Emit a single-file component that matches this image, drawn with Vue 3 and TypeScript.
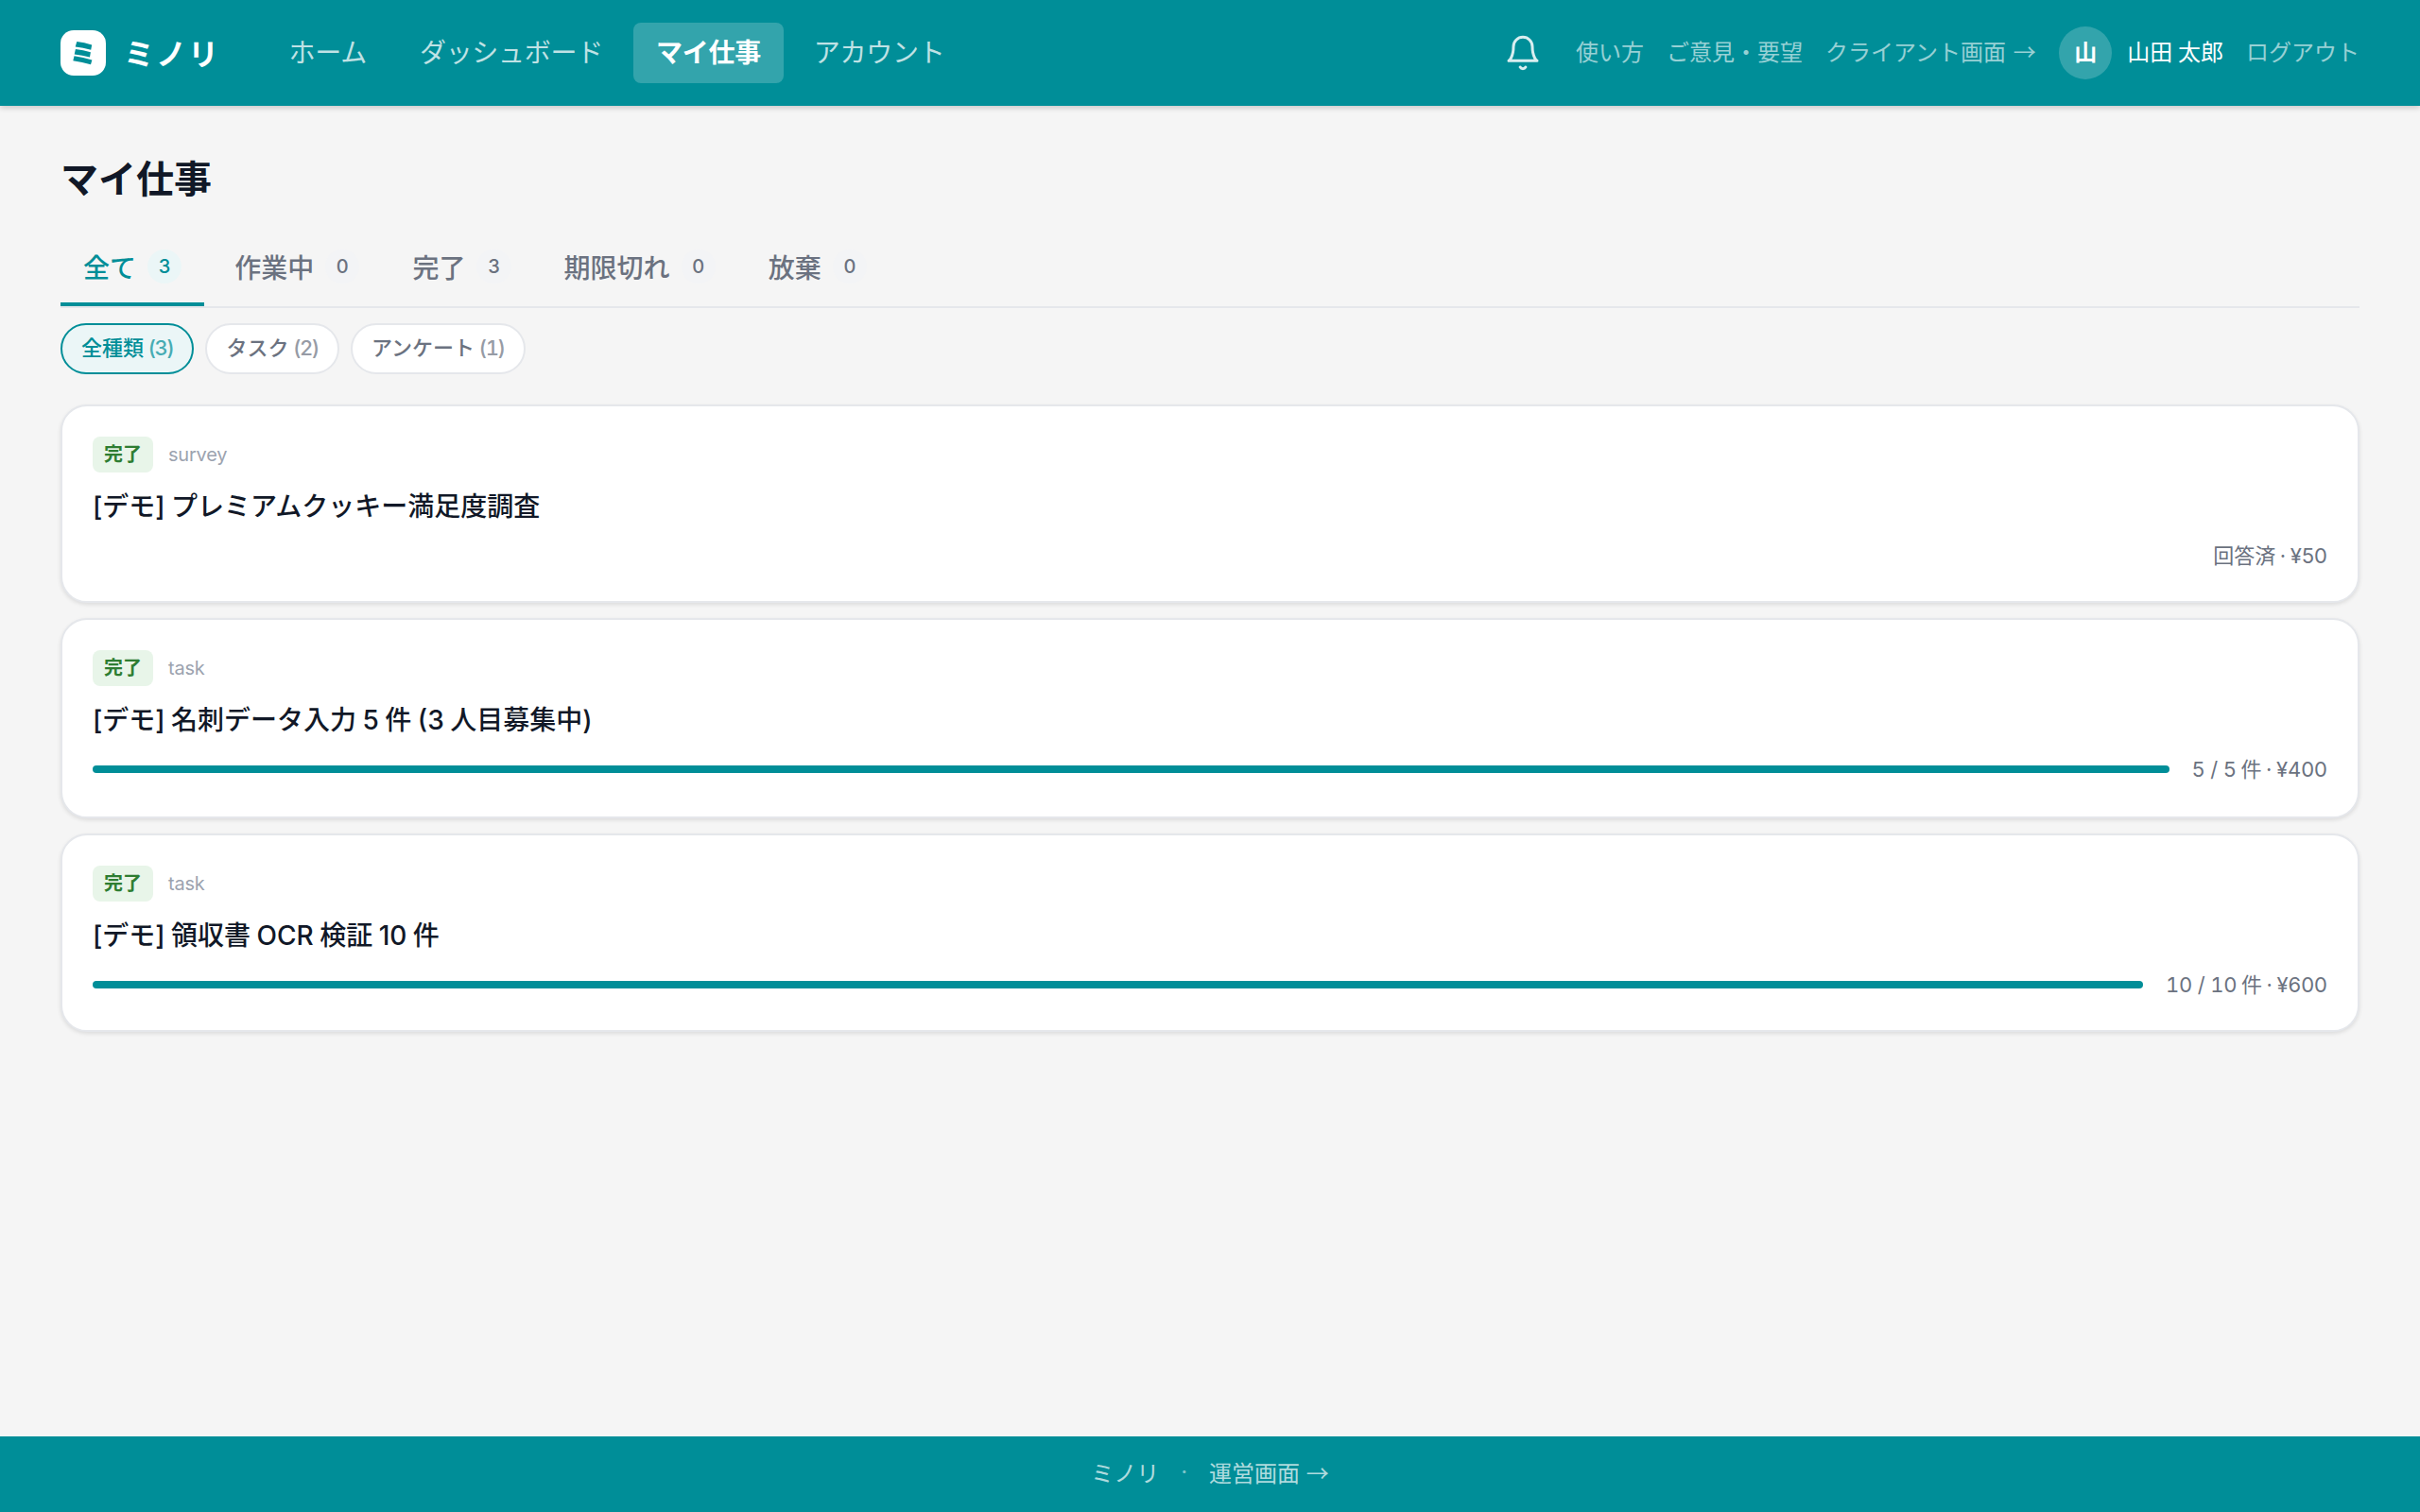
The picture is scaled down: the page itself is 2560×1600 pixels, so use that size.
<script setup lang="ts">
interface NavItem { label: string; active?: boolean }
interface Tab { label: string; count: number; active?: boolean }
interface Job {
  status: string
  kind: 'survey' | 'task'
  title: string
  done?: string
  summary: string
  progress?: number
}

const nav: NavItem[] = [
  { label: 'ホーム' },
  { label: 'ダッシュボード' },
  { label: 'マイ仕事', active: true },
  { label: 'アカウント' },
]

const tabs: Tab[] = [
  { label: '全て', count: 3, active: true },
  { label: '作業中', count: 0 },
  { label: '完了', count: 3 },
  { label: '期限切れ', count: 0 },
  { label: '放棄', count: 0 },
]

const chips: Tab[] = [
  { label: '全種類', count: 3, active: true },
  { label: 'タスク', count: 2 },
  { label: 'アンケート', count: 1 },
]

const jobs: Job[] = [
  { status: '完了', kind: 'survey', title: '[デモ] プレミアムクッキー満足度調査', summary: '回答済 · ¥50' },
  { status: '完了', kind: 'task', title: '[デモ] 名刺データ入力 5 件 (3 人目募集中)', done: '5 / 5', summary: ' 件 · ¥400', progress: 100 },
  { status: '完了', kind: 'task', title: '[デモ] 領収書 OCR 検証 10 件', done: '10 / 10', summary: ' 件 · ¥600', progress: 100 },
]
</script>

<template>
  <div class="page">
    <header class="header">
      <a class="brand">
        <svg class="logo" viewBox="0 0 48 48">
          <rect width="48" height="48" rx="14" fill="#fff" />
          <path d="M17.3 12 Q25 13 33.2 15.4 L32.2 20.8 Q24 18.3 15.7 17.5Z M15.9 20 Q24 21 31.9 23.3 L31 28.4 Q23 26.2 14.7 25.4Z M14.5 27.3 Q24 28.6 33.4 31.6 L32 36.3 Q23 33.5 13.3 32.2Z" fill="#008e98" />
        </svg>
        <span class="brand-name">ミノリ</span>
      </a>
      <nav class="nav">
        <a v-for="n in nav" :key="n.label" class="nav-item" :class="{ active: n.active }">{{ n.label }}</a>
      </nav>
      <div class="tools">
        <svg class="bell" viewBox="0 0 24 24" fill="none" stroke="currentColor" stroke-width="1.8" stroke-linecap="round" stroke-linejoin="round">
          <path d="M18 8A6 6 0 0 0 6 8c0 7-3 9-3 9h18s-3-2-3-9" />
          <path d="M13.73 21a2 2 0 0 1-3.46 0" />
        </svg>
        <a class="link">使い方</a>
        <a class="link">ご意見・要望</a>
        <a class="link">クライアント画面 <span class="arrow">→</span></a>
        <span class="user"><span class="avatar">山</span>山田 太郎</span>
        <a class="link">ログアウト</a>
      </div>
    </header>

    <main class="main">
      <h1 class="title">マイ仕事</h1>
      <div class="tabs">
        <button v-for="t in tabs" :key="t.label" class="tab" :class="{ active: t.active }">
          {{ t.label }}<span class="count">{{ t.count }}</span>
        </button>
      </div>
      <div class="chips">
        <button v-for="c in chips" :key="c.label" class="chip" :class="{ active: c.active }">
          {{ c.label }}<span class="chip-count">({{ c.count }})</span>
        </button>
      </div>
      <div class="jobs">
        <article v-for="j in jobs" :key="j.title" class="job">
          <div class="meta"><span class="status">{{ j.status }}</span><span class="kind">{{ j.kind }}</span></div>
          <h2 class="job-title">{{ j.title }}</h2>
          <div class="foot">
            <div class="track">
              <div v-if="j.progress" class="fill" :style="{ width: j.progress + '%' }"></div>
            </div>
            <span class="summary"><span v-if="j.done" class="done">{{ j.done }}</span>{{ j.summary }}</span>
          </div>
        </article>
      </div>
    </main>

    <footer class="footer"><span>ミノリ</span><span class="dot">·</span><a>運営画面 <span class="arrow">→</span></a></footer>
  </div>
</template>

<style>
body { background: #f5f5f5; }
</style>

<style scoped>
.page {
  min-height: 1600px;
  display: flex;
  flex-direction: column;
  background: #f5f5f5;
  color: #111827;
  font-family: Inter, "Noto Sans CJK JP", sans-serif;
}
.header {
  height: 112px;
  padding: 0 64px;
  display: flex;
  align-items: center;
  background: #008e98;
  color: #fff;
  box-shadow: 0 2px 6px rgba(0, 0, 0, 0.2);
}
.brand { display: flex; align-items: center; gap: 19px; width: 175px; }
.logo { width: 48px; height: 48px; }
.brand-name { padding-top: 4px; font-size: 32px; font-weight: 700; letter-spacing: 2px; line-height: 48px; }
.nav { display: flex; gap: 8px; margin-left: 42.6px; }
.nav-item {
  height: 64px;
  padding: 0 24px;
  border-radius: 8px;
  font-size: 28px;
  letter-spacing: -0.28px;
  line-height: 64px;
  color: rgba(255, 255, 255, 0.75);
}
.nav-item.active { background: rgba(255, 255, 255, 0.2); color: #fff; font-weight: 700; }
.tools { display: flex; align-items: center; gap: 24px; margin-left: auto; font-size: 24px; line-height: 36px; white-space: nowrap; }
.bell { width: 40px; height: 40px; margin-right: 12px; color: rgba(255, 255, 255, 0.85); }
.link { color: rgba(255, 255, 255, 0.6); }
.arrow { font-family: "Noto Sans CJK JP", sans-serif; line-height: 1; }
.tools .arrow { margin-left: 1px; margin-right: 0.5px; }
.user { display: flex; align-items: center; gap: 16px; word-spacing: -1px; }
.avatar {
  width: 56px;
  height: 56px;
  border-radius: 50%;
  background: rgba(255, 255, 255, 0.2);
  text-align: center;
  line-height: 56px;
  font-weight: 700;
}
.main { flex: 1; padding: 48px 64px; }
.title { margin: 0; height: 60px; font-size: 40px; font-weight: 700; line-height: 59px; }
.tabs { display: flex; gap: 8px; margin-top: 16px; height: 88px; border-bottom: 2px solid #e5e7eb; }
.tab {
  display: flex;
  align-items: center;
  gap: 12px;
  padding: 8px 24px 0;
  border: 0;
  border-bottom: 4px solid transparent;
  background: none;
  font: 500 28px Inter, "Noto Sans CJK JP", sans-serif;
  color: #6b7280;
}
.tab.active { color: #008e98; border-color: #008e98; }
.count {
  min-width: 36.2px;
  height: 36px;
  border-radius: 18px;
  background: #f3f4f6;
  font-size: 20px;
  line-height: 37px;
  text-align: center;
}
.tab.active .count { background: #ebf6f7; }
.chips { display: flex; gap: 12px; margin-top: 16px; }
.chip {
  height: 54px;
  padding: 0 20px 2px;
  border: 2px solid #e5e7eb;
  border-radius: 27px;
  background: #fff;
  color: #6b7280;
  font: 500 22px/46px Inter, "Noto Sans CJK JP", sans-serif;
}
.chip.active { border-color: #008e98; background: #ebf6f7; color: #008e98; }
.chip-count { margin-left: 4.5px; letter-spacing: -1.5px; opacity: 0.7; font-variant-numeric: tabular-nums; }
.jobs { display: flex; flex-direction: column; gap: 16px; margin-top: 32px; }
.job {
  box-sizing: border-box;
  height: 210px;
  padding: 32px;
  border: 2px solid #e5e7eb;
  border-radius: 28px;
  background: #fff;
  box-shadow: 0 2px 4px rgba(0, 0, 0, 0.1);
}
.job:nth-child(2) { height: 212px; }
.meta { display: flex; align-items: center; gap: 16px; height: 38px; }
.status {
  padding: 0 12px;
  border-radius: 8px;
  background: #e8f5e9;
  color: #2e7d32;
  font-size: 20px;
  font-weight: 700;
  line-height: 38px;
}
.kind { font-size: 20px; letter-spacing: -0.2px; color: #9ca3af; }
.job-title { margin: 15px 0 0; font-size: 28px; font-weight: 500; line-height: 42px; word-spacing: -1px; }
.foot { display: flex; align-items: center; gap: 24px; margin-top: 14px; height: 34px; }
.track { flex: 1; height: 8px; }
.fill { height: 8px; border-radius: 4px; background: #008e98; }
.summary { padding-bottom: 4px; font-size: 22px; color: #6b7280; white-space: nowrap; word-spacing: -1.6px; }
.done { font-variant-numeric: tabular-nums; letter-spacing: -0.2px; word-spacing: 0; }
.footer {
  box-sizing: border-box;
  height: 80px;
  padding-bottom: 5px;
  display: flex;
  align-items: center;
  justify-content: center;
  gap: 23px;
  background: #008e98;
  color: rgba(255, 255, 255, 0.7);
  font-size: 24px;
}
.dot { color: rgba(255, 255, 255, 0.5); }
</style>
